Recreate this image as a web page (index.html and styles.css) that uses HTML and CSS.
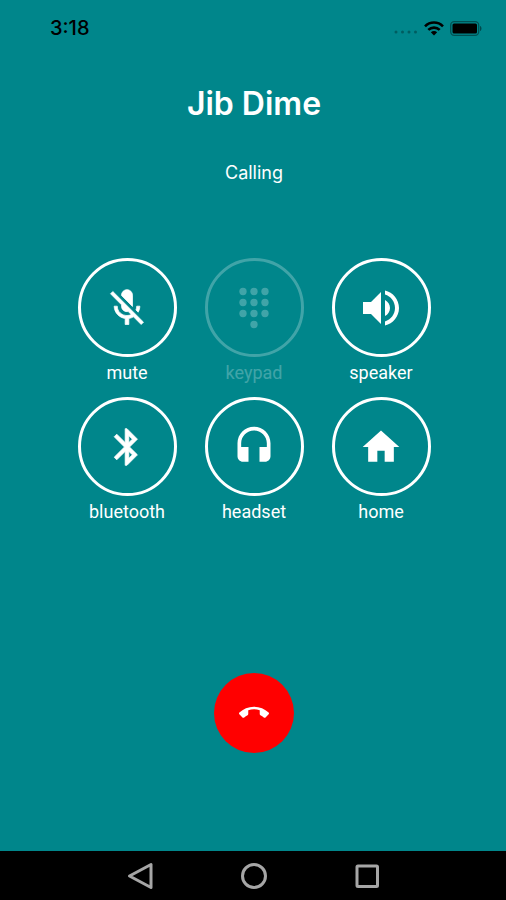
FILE: index.html
```html
<!DOCTYPE html>
<html lang="en">
<head>
<meta charset="utf-8">
<meta name="viewport" content="width=device-width, initial-scale=1">
<title>Calling Jib Dime</title>
<link rel="stylesheet" href="styles.css">
</head>
<body>
<header class="status">
  <time class="clock">3:18</time>
  <div class="indicators">
    <svg class="cell" viewBox="0 0 24 4" aria-hidden="true"><circle cx="2" cy="2" r="1.5"/><circle cx="8.500" cy="2" r="1.5"/><circle cx="15" cy="2" r="1.5"/><circle cx="21.500" cy="2" r="1.5"/></svg>
    <svg class="wifi" viewBox="0 0 20 15" aria-hidden="true"><g fill="none" stroke="#000" stroke-width="2.600"><path d="M1 5.300C6 .3 14 .3 19 5.300"/><path d="M4.300 8.900c3.200-3.100 8.200-3.100 11.400 0"/></g><path d="M10 14.500l-3.200-3.200c1.800-1.600 4.600-1.600 6.400 0z"/></svg>
    <svg class="battery" viewBox="0 0 32 15" aria-hidden="true"><rect x=".7" y=".7" width="28" height="13.600" rx="3.500" fill="none" stroke="#000" stroke-opacity=".4" stroke-width="1.300"/><rect x="2.500" y="2.500" width="24.500" height="10" rx="1.500"/><path d="M30 5c2 .6 2 4.400 0 5z" opacity=".45"/></svg>
  </div>
</header>

<main class="call">
  <h1 class="name">Jib Dime</h1>
  <p class="state">Calling</p>

  <div class="controls">
    <button class="control" type="button">
      <span class="ring"><svg class="icon icon-bold" viewBox="0 0 24 24" aria-hidden="true"><path d="M19 11h-1.700c0 .74-.16 1.430-.43 2.050l1.230 1.230c.56-.98.9-2.090.9-3.280zm-4.020.17c0-.06.02-.11.02-.17V5c0-1.660-1.340-3-3-3S9 3.340 9 5v.18l5.980 5.990zM4.270 3L3 4.270l6.010 6.010V11c0 1.660 1.330 3 2.990 3 .22 0 .44-.03.65-.08l1.660 1.660c-.71.33-1.500.52-2.310.52-2.760 0-5.300-2.100-5.300-5.100H5c0 3.410 2.720 6.230 6 6.720V21h2v-3.280c.91-.13 1.770-.45 2.540-.9L19.730 21 21 19.730 4.270 3z"/></svg></span>
      <span class="label">mute</span>
    </button>
    <button class="control" type="button" disabled>
      <span class="ring"><svg class="icon" viewBox="0 0 24 24" aria-hidden="true"><circle cx="6" cy="3" r="2"/><circle cx="12" cy="3" r="2"/><circle cx="18" cy="3" r="2"/><circle cx="6" cy="9" r="2"/><circle cx="12" cy="9" r="2"/><circle cx="18" cy="9" r="2"/><circle cx="6" cy="15" r="2"/><circle cx="12" cy="15" r="2"/><circle cx="18" cy="15" r="2"/><circle cx="12" cy="21" r="2"/></svg></span>
      <span class="label">keypad</span>
    </button>
    <button class="control" type="button">
      <span class="ring"><svg class="icon icon-large" viewBox="0 0 24 24" aria-hidden="true"><path d="M3 9v6h4l5 5V4L7 9H3zm13.500 3c0-1.770-1.020-3.290-2.500-4.030v8.050c1.480-.73 2.500-2.250 2.500-4.020zM14 3.230v2.060c2.890.86 5 3.540 5 6.710s-2.110 5.850-5 6.710v2.060c4.010-.91 7-4.490 7-8.770s-2.990-7.860-7-8.770z"/></svg></span>
      <span class="label">speaker</span>
    </button>
    <button class="control" type="button">
      <span class="ring"><svg class="icon icon-bold" viewBox="0 0 24 24" aria-hidden="true"><path d="M17.710 7.710L12 2h-1v7.590L6.410 5 5 6.410 10.590 12 5 17.590 6.410 19 11 14.410V22h1l5.710-5.710-4.300-4.290 4.300-4.290zM13 5.830l1.880 1.880L13 9.590V5.830zm1.880 10.460L13 18.170v-3.760l1.880 1.880z"/></svg></span>
      <span class="label">bluetooth</span>
    </button>
    <button class="control" type="button">
      <span class="ring"><svg class="icon" viewBox="0 0 24 24" aria-hidden="true"><path d="M12 1c-4.970 0-9 4.030-9 9v7c0 1.660 1.340 3 3 3h3v-8H5v-2c0-3.870 3.130-7 7-7s7 3.130 7 7v2h-4v8h3c1.660 0 3-1.340 3-3v-7c0-4.970-4.030-9-9-9z"/></svg></span>
      <span class="label">headset</span>
    </button>
    <button class="control" type="button">
      <span class="ring"><svg class="icon" viewBox="0 0 24 24" aria-hidden="true"><path d="M10 20v-6h4v6h5v-8h3L12 3 2 12h3v8z"/></svg></span>
      <span class="label">home</span>
    </button>
  </div>

  <button class="hangup" type="button" aria-label="End call">
    <svg class="icon-small" viewBox="0 0 24 24" aria-hidden="true"><path d="M12 9c-1.600 0-3.150.25-4.600.72v3.100c0 .39-.23.74-.56.9-.98.49-1.870 1.120-2.660 1.850-.18.18-.43.28-.7.28-.28 0-.53-.11-.71-.29L.29 13.080c-.18-.17-.29-.42-.29-.7 0-.28.11-.53.29-.71C3.340 8.780 7.460 7 12 7s8.660 1.780 11.710 4.670c.18.18.29.43.29.71 0 .28-.11.53-.29.71l-2.480 2.480c-.18.18-.43.29-.71.29-.27 0-.52-.11-.7-.28-.79-.74-1.690-1.360-2.670-1.850-.33-.16-.56-.5-.56-.9v-3.100C15.150 9.250 13.600 9 12 9z"/></svg>
  </button>
</main>

<nav class="navbar" aria-label="System">
  <button class="key" type="button" aria-label="Back"><svg viewBox="0 0 28 28"><path d="M24 2.500v23L2.500 14z"/></svg></button>
  <button class="key" type="button" aria-label="Home"><svg viewBox="0 0 28 28"><circle cx="14" cy="14" r="11.500"/></svg></button>
  <button class="key" type="button" aria-label="Recent apps"><svg viewBox="0 0 28 28"><rect x="4" y="4" width="20.500" height="20.500" rx="1"/></svg></button>
</nav>
</body>
</html>
```

FILE: styles.css
```css
* {
  box-sizing: border-box;
}

body {
  margin: 0;
  min-height: 100vh;
  display: flex;
  flex-direction: column;
  background: #00868b;
  color: #fff;
  font-family: Inter, "Liberation Sans", sans-serif;
}

button {
  padding: 0;
  border: 0;
  background: none;
  color: inherit;
  font: inherit;
}

svg {
  display: block;
}

.status {
  display: flex;
  align-items: center;
  justify-content: space-between;
  padding: 16px 24px 0 50px;
  color: #000;
}

.clock {
  font-size: 20px;
  line-height: 24px;
  font-weight: 500;
}

.indicators {
  display: flex;
  align-items: center;
  gap: 6px;
}

.cell {
  width: 24px;
  height: 4px;
  margin-top: 8px;
  opacity: 0.3;
}

.wifi {
  width: 20px;
  height: 15px;
}

.battery {
  width: 32px;
  height: 15px;
}

.call {
  flex: 1;
  display: flex;
  flex-direction: column;
  align-items: center;
  padding: 44px 0 24px 2px;
}

.name {
  margin: 0;
  font-size: 32px;
  line-height: 40px;
  font-weight: 600;
}

.state {
  margin: 37px 0 0;
  font-size: 18px;
  line-height: 24px;
}

.controls {
  display: grid;
  grid-template-columns: repeat(3, 99px);
  gap: 12px 28px;
  margin-top: 73px;
}

.control {
  display: flex;
  flex-direction: column;
  align-items: center;
  gap: 4px;
}

.control:disabled {
  opacity: 0.25;
}

.ring {
  display: grid;
  place-items: center;
  width: 99px;
  height: 99px;
  border: 3px solid #fff;
  border-radius: 50%;
}

.label {
  font-family: Roboto, "Liberation Sans", sans-serif;
  font-size: 18px;
  line-height: 24px;
}

.icon {
  width: 44px;
  height: 44px;
  fill: #fff;
}

.icon-bold {
  stroke: #fff;
  stroke-width: 0.4;
}

.icon-large {
  width: 48px;
  height: 48px;
}

.icon-small {
  width: 30px;
  height: 30px;
  fill: #fff;
}

.hangup {
  display: grid;
  place-items: center;
  width: 80px;
  height: 80px;
  margin-top: 149px;
  border-radius: 50%;
  background: #f00;
}

.navbar {
  display: flex;
  justify-content: center;
  align-items: center;
  gap: 85px;
  height: 49px;
  padding-left: 2px;
  background: #000;
}

.key svg {
  width: 28px;
  height: 28px;
  fill: none;
  stroke: #a6a6a6;
  stroke-width: 3;
  stroke-linejoin: round;
}
```
